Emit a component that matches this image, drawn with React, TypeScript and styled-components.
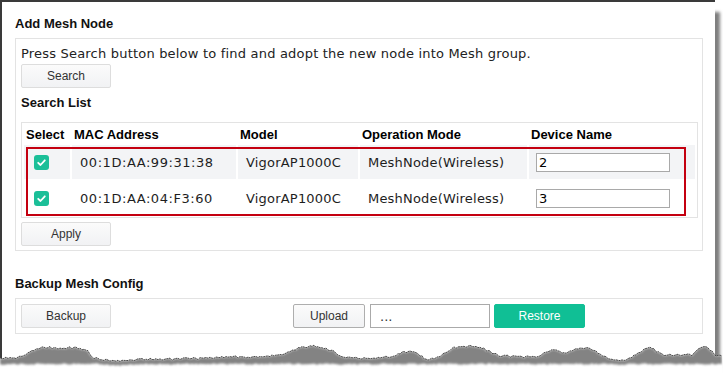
import React from "react";
import styled, { createGlobalStyle } from "styled-components";

const GlobalStyle = createGlobalStyle`
  *, *::before, *::after { box-sizing: border-box; }
  html, body { margin: 0; padding: 0; background: #ffffff; }
  body {
    width: 723px;
    height: 375px;
    overflow: hidden;
    font-family: "Liberation Sans", Arial, sans-serif;
  }
`;

const SANS = `"Liberation Sans", Arial, sans-serif`;
const VERDANA = `"DejaVu Sans", Verdana, sans-serif`;
const COLS = "46px 164px 120px 167px 166px";

const Frame = styled.div`
  position: relative;
  width: 723px;
  height: 375px;
  overflow: hidden;
  background: #ffffff;
`;

const Paper = styled.div`
  width: 715px;
  height: 375px;
  border-top: 2px solid #3a3a3a;
  border-left: 2px solid #3a3a3a;
  background: #ffffff;
  box-shadow: 5px 12px 3px rgba(0, 0, 0, 0.5);
  padding-left: 13px;
  display: flex;
  flex-direction: column;
  align-items: flex-start;
`;

const SectionTitle = styled.h2<{ $gap: number }>`
  margin: ${(p) => p.$gap}px 0 0 0;
  font: bold 13px/15px ${SANS};
  color: #111;
`;

const Panel = styled.div<{ $pad: string }>`
  width: 688px;
  margin-top: 7px;
  border: 1px solid #e3e3e3;
  padding: ${(p) => p.$pad};
  display: flex;
  flex-direction: column;
  align-items: flex-start;
`;

const Hint = styled.p`
  margin: 0;
  font: 13px/15px ${VERDANA};
  letter-spacing: 0.2px;
  color: #222;
  white-space: nowrap;
`;

const SubTitle = styled.h3`
  margin: 7px 0 0 0;
  font: bold 13px/15px ${SANS};
  color: #111;
`;

type BtnKind = "plain" | "upload" | "restore";

const Button = styled.button<{ $kind?: BtnKind; $w?: number; $gap?: number }>`
  width: ${(p) => p.$w ?? 90}px;
  height: 24px;
  margin: ${(p) => p.$gap ?? 0}px 0 0 0;
  padding: 0;
  border-radius: 2px;
  font: 12px/22px ${SANS};
  text-align: center;
  cursor: pointer;
  flex: none;
  color: ${(p) => (p.$kind === "restore" ? "#ffffff" : "#333")};
  border: 1px solid
    ${(p) =>
      p.$kind === "restore" ? "#10bf95" : p.$kind === "upload" ? "#aeaeae" : "#dddddd"};
  background: ${(p) =>
    p.$kind === "restore"
      ? "#10bf95"
      : "linear-gradient(#fbfbfb, #f1f2f4)"};
`;

const TableWrap = styled.div`
  position: relative;
  width: 677px;
  margin-top: 12px;
  border: 1px solid #e3e3e3;
  padding: 2px;
  display: flex;
  flex-direction: column;
  gap: 2px;
`;

const Row = styled.div<{ $head?: boolean; $shade?: boolean }>`
  display: grid;
  grid-template-columns: ${COLS};
  column-gap: 2px;
  height: ${(p) => (p.$head ? 18 : 34)}px;
  & > * {
    background: ${(p) => (p.$shade ? "#f3f4f6" : "transparent")};
  }
`;

const Cell = styled.div<{ $pad: number }>`
  display: flex;
  align-items: center;
  padding-left: ${(p) => p.$pad}px;
  white-space: nowrap;
  overflow: hidden;
`;

const HeadText = styled.span`
  font: bold 13px/15px ${SANS};
  color: #000;
`;

const BodyText = styled.span<{ $mono?: boolean }>`
  font: 13px/15px ${VERDANA};
  color: #1e1e1e;
  letter-spacing: ${(p) => (p.$mono ? "0.55px" : "0.2px")};
`;

const Check = styled.span`
  width: 15px;
  height: 15px;
  border-radius: 3px;
  background: #1bbf98;
  display: flex;
  align-items: center;
  justify-content: center;
`;

const NameInput = styled.input`
  width: 134px;
  height: 19px;
  margin: 0;
  border: 1px solid #a9a9a9;
  padding: 0 2px;
  font: 13px ${VERDANA};
  color: #000;
  background: #fff;
  outline: none;
`;

const Highlight = styled.div`
  position: absolute;
  left: 4px;
  top: 24px;
  width: 660px;
  height: 69px;
  border: 2px solid #c40010;
  pointer-events: none;
`;

const BackupRow = styled.div`
  display: flex;
  align-items: center;
`;

const FileGroup = styled.div`
  display: flex;
  align-items: center;
  margin-left: 182px;
`;

const FileBox = styled.input`
  width: 120px;
  height: 24px;
  margin: 0 4px 0 5px;
  border: 1px solid #aaaaaa;
  padding: 0 0 0 9px;
  font: 13px ${VERDANA};
  color: #333;
  background: #fff;
  outline: none;
`;

const TornSvg = styled.svg`
  position: absolute;
  left: 0;
  top: 330px;
  width: 723px;
  height: 45px;
  pointer-events: none;
`;

/* ---------- torn edge geometry ---------- */
const KEY: [number, number][] = [
  [0, 358], [14, 358], [22, 357], [30, 352], [38, 348], [48, 347], [58, 349],
  [68, 348], [80, 348], [87, 350], [92, 357], [100, 360], [120, 361], [150, 359],
  [180, 359], [210, 358], [240, 357], [265, 357], [282, 354], [292, 350],
  [302, 347], [312, 346], [322, 347], [332, 351], [342, 356], [355, 358],
  [375, 358], [392, 356], [402, 353], [411, 350], [420, 356], [430, 360],
  [442, 355], [452, 348], [462, 347], [472, 346], [482, 348], [490, 352],
  [500, 356], [520, 357], [538, 356], [548, 351], [556, 350], [563, 354],
  [574, 349], [584, 348], [594, 350], [604, 357], [614, 361], [628, 359],
  [640, 352], [649, 347], [656, 351], [665, 355], [680, 355], [692, 355],
  [700, 348], [706, 347], [712, 352], [716, 355], [723, 355],
];

const TOP = 330;

function interp(x: number): number {
  for (let i = 0; i < KEY.length - 1; i++) {
    const [x0, y0] = KEY[i];
    const [x1, y1] = KEY[i + 1];
    if (x >= x0 && x <= x1) {
      return y0 + ((y1 - y0) * (x - x0)) / (x1 - x0 || 1);
    }
  }
  return KEY[KEY.length - 1][1];
}

function noise(x: number): number {
  const n = Math.sin(x * 12.9898 + 4.1) * 43758.5453;
  return n - Math.floor(n) - 0.5;
}

const EDGE: [number, number][] = [];
for (let x = 0; x <= 723; x += 2) {
  EDGE.push([x, interp(x) + noise(x) * 2.4 - TOP]);
}

const edgeLine = EDGE.map(([x, y]) => `${x},${y.toFixed(1)}`).join(" ");
const below = `M0,${EDGE[0][1].toFixed(1)} L${edgeLine} L723,45 L0,45 Z`;
const lower = EDGE.map(([x, y]) => {
  const base = 364 - TOP + noise(x + 91) * 1.5;
  return [x, Math.max(y + 4.5, base)] as [number, number];
});
const shadowPath =
  `M${edgeLine.split(" ")[0]} L${edgeLine} ` +
  lower
    .slice()
    .reverse()
    .map(([x, y]) => `L${x},${y.toFixed(1)}`)
    .join(" ") +
  " Z";

const TornEdge: React.FC = () => (
  <TornSvg viewBox="0 0 723 45" aria-hidden="true">
    <defs>
      <clipPath id="belowEdge">
        <path d={below} />
      </clipPath>
      <filter id="soft" x="-5%" y="-50%" width="110%" height="200%">
        <feGaussianBlur stdDeviation="1.3" />
      </filter>
    </defs>
    <path d={below} fill="#ffffff" />
    <g clipPath="url(#belowEdge)">
      <path d={shadowPath} fill="#6e6e6e" opacity="0.85" filter="url(#soft)" />
    </g>
    <polyline
      points={edgeLine}
      fill="none"
      stroke="#3c3c3c"
      strokeWidth="0.9"
      strokeDasharray="2 0.6"
    />
  </TornSvg>
);

const CheckIcon: React.FC = () => (
  <svg width="11" height="11" viewBox="0 0 11 11">
    <path
      d="M2.2 5.8 L4.5 8 L8.8 3.3"
      fill="none"
      stroke="#ffffff"
      strokeWidth="1.8"
      strokeLinecap="round"
      strokeLinejoin="round"
    />
  </svg>
);

const NODES = [
  { mac: "00:1D:AA:99:31:38", model: "VigorAP1000C", mode: "MeshNode(Wireless)", name: "2" },
  { mac: "00:1D:AA:04:F3:60", model: "VigorAP1000C", mode: "MeshNode(Wireless)", name: "3" },
];

export default function App() {
  return (
    <>
      <GlobalStyle />
      <Frame>
        <Paper>
          <SectionTitle $gap={14}>Add Mesh Node</SectionTitle>
          <Panel $pad="7px 4px 4px 5px">
            <Hint>Press Search button below to find and adopt the new node into Mesh group.</Hint>
            <Button $gap={3}>Search</Button>
            <SubTitle>Search List</SubTitle>
            <TableWrap>
              <Row $head>
                <Cell $pad={2}><HeadText>Select</HeadText></Cell>
                <Cell $pad={2}><HeadText>MAC Address</HeadText></Cell>
                <Cell $pad={2}><HeadText>Model</HeadText></Cell>
                <Cell $pad={2}><HeadText>Operation Mode</HeadText></Cell>
                <Cell $pad={2}><HeadText>Device Name</HeadText></Cell>
              </Row>
              {NODES.map((n, i) => (
                <Row key={n.mac} $shade={i % 2 === 0}>
                  <Cell $pad={10}>
                    <Check><CheckIcon /></Check>
                  </Cell>
                  <Cell $pad={8}><BodyText $mono>{n.mac}</BodyText></Cell>
                  <Cell $pad={8}><BodyText>{n.model}</BodyText></Cell>
                  <Cell $pad={8}><BodyText>{n.mode}</BodyText></Cell>
                  <Cell $pad={7}>
                    <NameInput value={n.name} readOnly />
                  </Cell>
                </Row>
              ))}
              <Highlight />
            </TableWrap>
            <Button $gap={4}>Apply</Button>
          </Panel>
          <SectionTitle $gap={25}>Backup Mesh Config</SectionTitle>
          <Panel $pad="5px 4px 5px 5px">
            <BackupRow>
              <Button>Backup</Button>
              <FileGroup>
                <Button $kind="upload" $w={72}>Upload</Button>
                <FileBox value="..." readOnly />
                <Button $kind="restore" $w={91}>Restore</Button>
              </FileGroup>
            </BackupRow>
          </Panel>
        </Paper>
        <TornEdge />
      </Frame>
    </>
  );
}
